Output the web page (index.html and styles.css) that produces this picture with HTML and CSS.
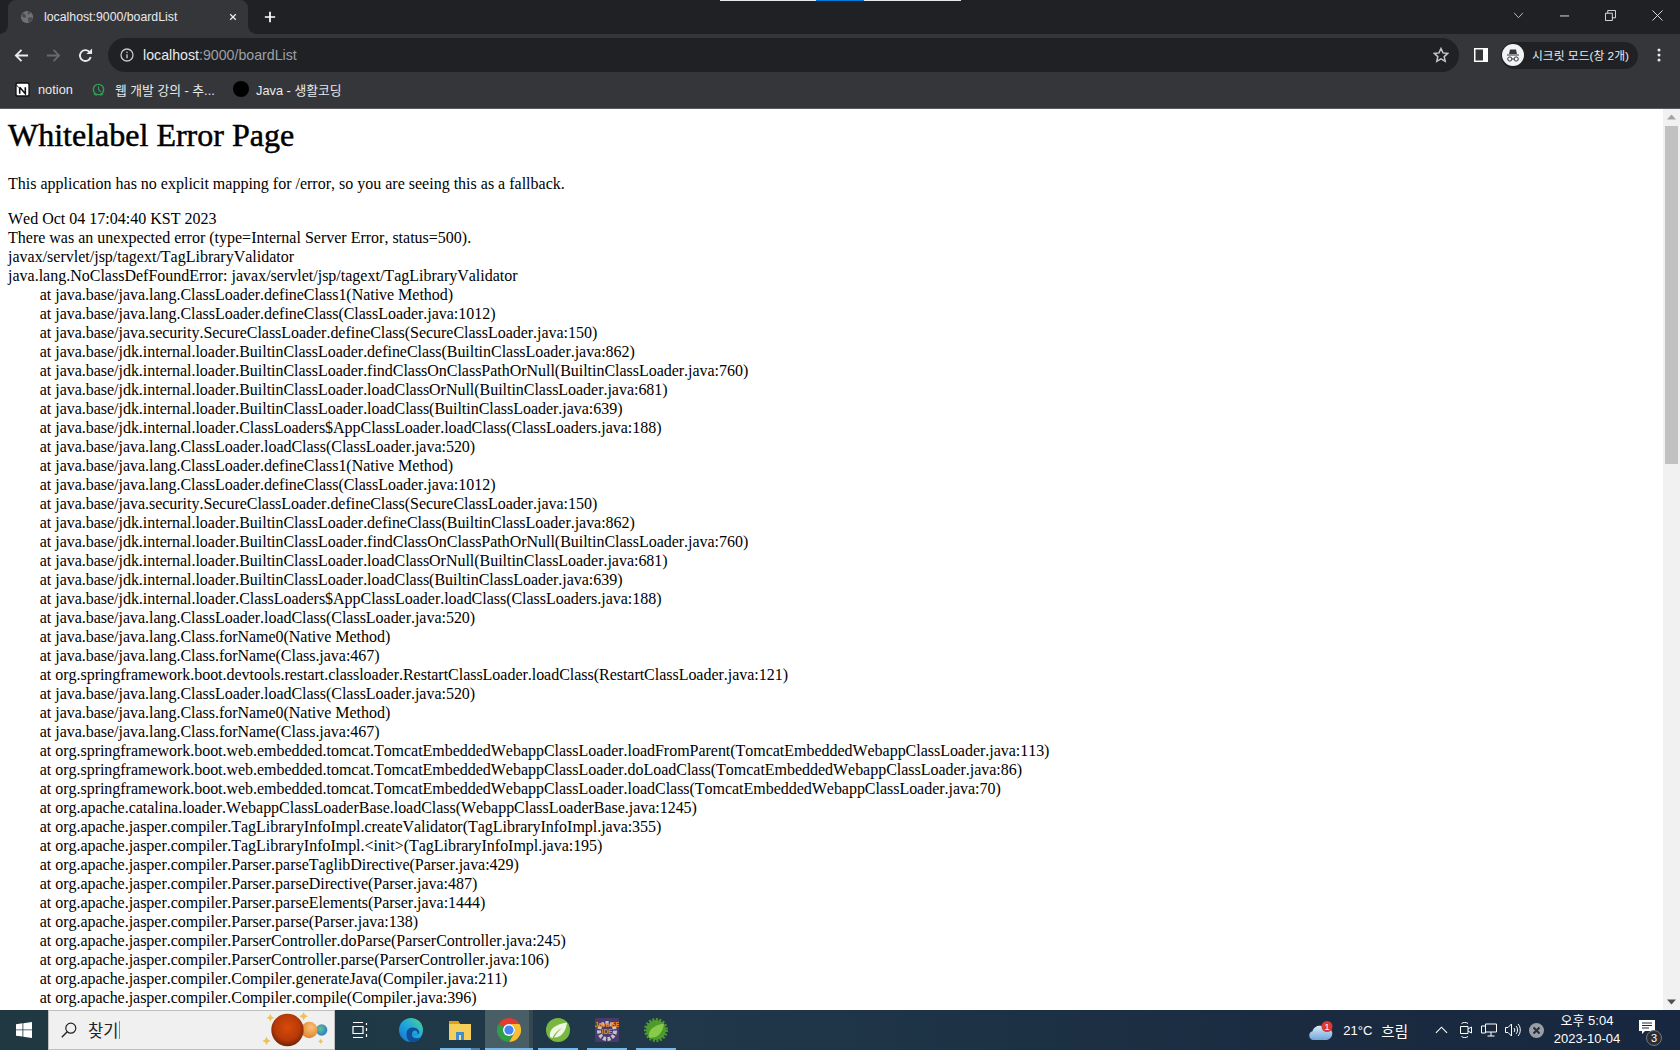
FILE: index.html
```html
<!DOCTYPE html>
<html lang="ko">
<head>
<meta charset="utf-8">
<title>localhost:9000/boardList</title>
<link rel="stylesheet" href="styles.css">
</head>
<body>
<div class="browser">
  <div class="tabstrip">
    <div class="capture-bar"><span class="cap-a"></span><span class="cap-b"></span><span class="cap-a2"></span></div>
    <div class="tab">
      <svg class="tab-favicon" viewBox="0 0 16 16"><circle cx="8" cy="8" r="7" fill="#6f7174"/><path d="M3 3.500l3 1.500 1 2.500-2 1.500-3-2zM9 1.500l3 1-1 2-2 1zM9 9l4-1 1.500 2-3 4-2-.5z" fill="#4a4b4f"/></svg>
      <span class="tab-title">localhost:9000/boardList</span>
      <svg class="tab-close" viewBox="0 0 10 10"><path d="M1.500 1.500l7 7M8.500 1.500l-7 7" stroke="#e8eaed" stroke-width="1.600" fill="none"/></svg>
    </div>
    <svg class="new-tab" viewBox="0 0 14 14"><path d="M7 1v12M1 7h12" stroke="#fff" stroke-width="2" fill="none"/></svg>
    <div class="win-controls">
      <svg class="wc wc-search" viewBox="0 0 12 8"><path d="M1 1l5 5.500 5-5.500" stroke="#c8c9cb" fill="none"/></svg>
      <svg class="wc wc-min" viewBox="0 0 12 12"><path d="M1 6.500h10" stroke="#e8eaed" fill="none"/></svg>
      <svg class="wc wc-max" viewBox="0 0 12 12"><path d="M.5 3.500h7.500v8h-7.500zM3 3.500v-3h8.500v8h-3.500" stroke="#e8eaed" fill="none"/></svg>
      <svg class="wc wc-close" viewBox="0 0 12 12"><path d="M.5.500l11 11M11.500.500l-11 11" stroke="#e8eaed" fill="none"/></svg>
    </div>
  </div>

  <div class="toolbar">
    <div class="nav-group">
      <svg class="nav" viewBox="0 0 16 16"><path d="M15 8H2M8 2L2 8l6 6" stroke="#e8eaed" stroke-width="2" fill="none"/></svg>
      <svg class="nav" viewBox="0 0 16 16"><path d="M1 8h13M8 2l6 6-6 6" stroke="#66686b" stroke-width="2" fill="none"/></svg>
      <svg class="nav" viewBox="0 0 16 16"><path d="M13.500 9.500A5.800 5.800 0 1 1 12 4" stroke="#e8eaed" stroke-width="2" fill="none"/><path d="M9 6.500h6v-6z" fill="#e8eaed"/></svg>
    </div>
    <div class="omnibox">
      <svg class="info" viewBox="0 0 14 14"><circle cx="7" cy="7" r="6" stroke="#c4c6c9" stroke-width="1.300" fill="none"/><path d="M7 6.200v4M7 3.700v1.300" stroke="#c4c6c9" stroke-width="1.400"/></svg>
      <span class="url"><span class="url-host">localhost</span>:9000/boardList</span>
      <svg class="star" viewBox="0 0 16 16"><path d="M8 1.500l2 4.400 4.800.500-3.600 3.200 1 4.700L8 11.900l-4.200 2.400 1-4.700L1.200 6.400 6 5.900z" stroke="#c4c6c9" stroke-width="1.500" fill="none"/></svg>
    </div>
    <svg class="side-panel" viewBox="0 0 14 14"><rect width="14" height="14" fill="#fff"/><rect x="1.500" y="1.500" width="7.500" height="11" fill="#35363a"/></svg>
    <div class="incognito">
      <svg class="inc-icon" viewBox="0 0 22 22"><circle cx="11" cy="11" r="11" fill="#f1f3f4"/><path d="M5 10.500h12v1H5zM7 10l1-4.500h6l1 4.500z" fill="#35363a"/><circle cx="7.800" cy="15" r="2.100" stroke="#35363a" fill="none"/><circle cx="14.200" cy="15" r="2.100" stroke="#35363a" fill="none"/><path d="M9.900 15h2.200" stroke="#35363a"/></svg>
      <span class="inc-label">시크릿 모드(창 2개)</span>
    </div>
    <svg class="kebab" viewBox="0 0 4 14"><circle cx="2" cy="2" r="1.500" fill="#e8eaed"/><circle cx="2" cy="7" r="1.500" fill="#e8eaed"/><circle cx="2" cy="12" r="1.500" fill="#e8eaed"/></svg>
  </div>

  <div class="bookmarks">
    <div class="bm bm-notion">
      <svg class="bm-icon" viewBox="0 0 16 16"><rect x="1" y="1" width="14" height="14" rx="2" fill="#fff" stroke="#111" stroke-width="1.500"/><path d="M1 2.500l3 3.500" stroke="#111"/><path d="M5 5.500v7M5 5.500l6 7V5.500" stroke="#111" stroke-width="1.700" fill="none"/></svg>
      <span>notion</span>
    </div>
    <div class="bm bm-web">
      <svg class="bm-icon" viewBox="0 0 16 16"><circle cx="8" cy="8" r="5.500" stroke="#2f9e58" stroke-width="1.500" fill="none"/><path d="M8 4.500V8l2.500 2.500M3 12.500l3 2M13 12.500l-3 2" stroke="#2f9e58" stroke-width="1.200" fill="none"/></svg>
      <span>웹 개발 강의 - 추...</span>
    </div>
    <div class="bm bm-java">
      <span class="bm-dot"></span>
      <span>Java - 생활코딩</span>
    </div>
  </div>

  <div class="viewport">
    <main class="page">
      <h1 class="err-title">Whitelabel Error Page</h1>
      <p class="err-lead">This application has no explicit mapping for /error, so you are seeing this as a fallback.</p>
      <div class="err-date">Wed Oct 04 17:04:40 KST 2023</div>
      <div>There was an unexpected error (type=Internal Server Error, status=500).</div>
      <div>javax/servlet/jsp/tagext/TagLibraryValidator</div>
      <div>java.lang.NoClassDefFoundError: javax/servlet/jsp/tagext/TagLibraryValidator</div>
      <div class="trace">	at java.base/java.lang.ClassLoader.defineClass1(Native Method)
	at java.base/java.lang.ClassLoader.defineClass(ClassLoader.java:1012)
	at java.base/java.security.SecureClassLoader.defineClass(SecureClassLoader.java:150)
	at java.base/jdk.internal.loader.BuiltinClassLoader.defineClass(BuiltinClassLoader.java:862)
	at java.base/jdk.internal.loader.BuiltinClassLoader.findClassOnClassPathOrNull(BuiltinClassLoader.java:760)
	at java.base/jdk.internal.loader.BuiltinClassLoader.loadClassOrNull(BuiltinClassLoader.java:681)
	at java.base/jdk.internal.loader.BuiltinClassLoader.loadClass(BuiltinClassLoader.java:639)
	at java.base/jdk.internal.loader.ClassLoaders$AppClassLoader.loadClass(ClassLoaders.java:188)
	at java.base/java.lang.ClassLoader.loadClass(ClassLoader.java:520)
	at java.base/java.lang.ClassLoader.defineClass1(Native Method)
	at java.base/java.lang.ClassLoader.defineClass(ClassLoader.java:1012)
	at java.base/java.security.SecureClassLoader.defineClass(SecureClassLoader.java:150)
	at java.base/jdk.internal.loader.BuiltinClassLoader.defineClass(BuiltinClassLoader.java:862)
	at java.base/jdk.internal.loader.BuiltinClassLoader.findClassOnClassPathOrNull(BuiltinClassLoader.java:760)
	at java.base/jdk.internal.loader.BuiltinClassLoader.loadClassOrNull(BuiltinClassLoader.java:681)
	at java.base/jdk.internal.loader.BuiltinClassLoader.loadClass(BuiltinClassLoader.java:639)
	at java.base/jdk.internal.loader.ClassLoaders$AppClassLoader.loadClass(ClassLoaders.java:188)
	at java.base/java.lang.ClassLoader.loadClass(ClassLoader.java:520)
	at java.base/java.lang.Class.forName0(Native Method)
	at java.base/java.lang.Class.forName(Class.java:467)
	at org.springframework.boot.devtools.restart.classloader.RestartClassLoader.loadClass(RestartClassLoader.java:121)
	at java.base/java.lang.ClassLoader.loadClass(ClassLoader.java:520)
	at java.base/java.lang.Class.forName0(Native Method)
	at java.base/java.lang.Class.forName(Class.java:467)
	at org.springframework.boot.web.embedded.tomcat.TomcatEmbeddedWebappClassLoader.loadFromParent(TomcatEmbeddedWebappClassLoader.java:113)
	at org.springframework.boot.web.embedded.tomcat.TomcatEmbeddedWebappClassLoader.doLoadClass(TomcatEmbeddedWebappClassLoader.java:86)
	at org.springframework.boot.web.embedded.tomcat.TomcatEmbeddedWebappClassLoader.loadClass(TomcatEmbeddedWebappClassLoader.java:70)
	at org.apache.catalina.loader.WebappClassLoaderBase.loadClass(WebappClassLoaderBase.java:1245)
	at org.apache.jasper.compiler.TagLibraryInfoImpl.createValidator(TagLibraryInfoImpl.java:355)
	at org.apache.jasper.compiler.TagLibraryInfoImpl.&lt;init&gt;(TagLibraryInfoImpl.java:195)
	at org.apache.jasper.compiler.Parser.parseTaglibDirective(Parser.java:429)
	at org.apache.jasper.compiler.Parser.parseDirective(Parser.java:487)
	at org.apache.jasper.compiler.Parser.parseElements(Parser.java:1444)
	at org.apache.jasper.compiler.Parser.parse(Parser.java:138)
	at org.apache.jasper.compiler.ParserController.doParse(ParserController.java:245)
	at org.apache.jasper.compiler.ParserController.parse(ParserController.java:106)
	at org.apache.jasper.compiler.Compiler.generateJava(Compiler.java:211)
	at org.apache.jasper.compiler.Compiler.compile(Compiler.java:396)</div>
    </main>
    <div class="scrollbar">
      <svg class="sb-arrow" viewBox="0 0 17 17"><path d="M8.500 5.500l4.500 5h-9z" fill="#a3a3a3"/></svg>
      <div class="sb-track"><div class="sb-thumb"></div></div>
      <svg class="sb-arrow" viewBox="0 0 17 17"><path d="M8.500 11.500l4.500-5h-9z" fill="#505050"/></svg>
    </div>
  </div>

  <div class="taskbar">
    <div class="tb-start">
      <svg class="win-logo" viewBox="0 0 16 16"><path d="M0 2.200l6.500-.9v6.200H0zM7.300 1.200L16 0v7.500H7.300zM0 8.300h6.500v6.300L0 13.700zM7.300 8.300H16V16l-8.700-1.200z" fill="#fff"/></svg>
    </div>
    <div class="tb-search">
      <svg class="search-icon" viewBox="0 0 16 16"><circle cx="9.800" cy="6.200" r="5" stroke="#222" stroke-width="1.200" fill="none"/><path d="M6.200 9.800L.8 15.200" stroke="#222" stroke-width="1.400"/></svg>
      <span class="search-text">찾기</span>
      <svg class="planets" viewBox="0 0 72 40">
        <defs>
          <radialGradient id="pl-big" cx=".5" cy=".42" r=".6"><stop offset="0" stop-color="#d94a08"/><stop offset=".65" stop-color="#b63a08"/><stop offset="1" stop-color="#6f1f03"/></radialGradient>
          <radialGradient id="pl-mid" cx=".6" cy=".35" r=".7"><stop offset="0" stop-color="#fbc27a"/><stop offset="1" stop-color="#dd7f2a"/></radialGradient>
          <radialGradient id="pl-small" cx=".4" cy=".4" r=".7"><stop offset="0" stop-color="#5cc59a"/><stop offset="1" stop-color="#2b74c4"/></radialGradient>
        </defs>
        <path d="M9 3l1.300 2.700L13 7l-2.700 1.300L9 11 7.700 8.300 5 7l2.700-1.300zM44 1l1.500 3 3 1.500-3 1.500L44 10l-1.500-3-3-1.500 3-1.500zM5 27l1.500 3 3 1.500-3 1.500L5 36l-1.500-3-3-1.500 3-1.500zM62 29l1 2 2 1-2 1-1 2-1-2-2-1 2-1z" fill="#ecc25c"/>
        <circle cx="63" cy="20" r="6" fill="url(#pl-small)"/>
        <circle cx="50" cy="20" r="8.700" fill="url(#pl-mid)"/>
        <circle cx="27" cy="20" r="17" fill="url(#pl-big)"/>
      </svg>
    </div>
    <svg class="task-view" viewBox="0 0 16 16"><path d="M1 .5h10M1 15.500h10M1 4.500h10v7H1zM14.500 1v2M14.500 6v3M14.500 12v3" stroke="#fff" stroke-width="1.200" fill="none"/></svg>
    <div class="tb-app app-edge">
      <svg class="app-icon" viewBox="0 0 24 24">
        <defs><linearGradient id="edge-g" x1="0" y1="1" x2="1" y2="0"><stop offset="0" stop-color="#1570c8"/><stop offset=".5" stop-color="#1ea6df"/><stop offset="1" stop-color="#52d68a"/></linearGradient></defs>
        <circle cx="12" cy="12" r="12" fill="url(#edge-g)"/>
        <path d="M7.500 15c0-6 9.500-7.500 12.500-2 1 2-.5 3.500-2.500 3.500H13c-.5 3 3 5.500 10 2.500-3 4-7.500 5.500-11 5C9 23.500 7.500 19.500 7.500 15z" fill="#0f4f9a"/>
        <path d="M13 16.500c0-2 1-3.500 2.500-4 2 0 3 1 3 2.500 0 1-.5 1.500-1 1.500z" fill="#1ea6df"/>
      </svg>
    </div>
    <div class="tb-app app-files is-running is-stacked">
      <svg class="app-icon" viewBox="0 0 24 24"><path d="M1 3h9l2 3h11v16H1z" fill="#f6cf5a"/><path d="M1 3h9l2 3H1z" fill="#e69c16"/><path d="M8 14h8v8H8z" fill="#3e8ed0"/><path d="M11 17h2v5h-2z" fill="#f6dd8e"/></svg>
    </div>
    <div class="tb-app app-chrome is-running is-active">
      <svg class="app-icon" viewBox="0 0 24 24"><path d="M12 0A12 12 0 0 1 22.400 6H12a6 6 0 0 0-5.200 3L1.600 6A12 12 0 0 1 12 0z" fill="#e33b2e"/><path d="M22.400 6A12 12 0 0 1 12 24l5.200-9A6 6 0 0 0 12 6z" fill="#fbc02d"/><path d="M1.600 6l5.200 3a6 6 0 0 0 10.400 6L12 24A12 12 0 0 1 1.600 6z" fill="#2f9e48"/><circle cx="12" cy="12" r="6" fill="#fff"/><circle cx="12" cy="12" r="4.600" fill="#4285f4"/></svg>
    </div>
    <div class="tb-app app-spring is-running">
      <svg class="app-icon" viewBox="0 0 24 24"><circle cx="12" cy="12" r="12" fill="#79b83f"/><path d="M4 19c-1.500-8 6-13 17-14.500C20 14 14.500 20 8 19.500c2-4 5-7 8-9.500-4 2-7 5-9.500 10z" fill="#eef5e2"/></svg>
    </div>
    <div class="tb-app app-eclipse is-running">
      <svg class="app-icon" viewBox="0 0 24 24"><rect width="24" height="24" rx="1.500" fill="#4a3a6e"/><circle class="ee-gear" cx="12" cy="13" r="8"/><circle cx="12" cy="13" r="5" fill="#4a3a6e"/><text class="ee-text" x="12" y="8.500">Java EE</text><text class="ee-text" x="12" y="16">IDE</text></svg>
    </div>
    <div class="tb-app app-sts is-running">
      <svg class="app-icon" viewBox="0 0 24 24"><circle class="sts-gear" cx="12" cy="12" r="10.500"/><circle cx="12" cy="12" r="10" fill="#4f9a2c"/><path d="M5 20c-1.500-8 5-13 15-14.500C19 14 14 20 8 19.500z" fill="#86cc4a"/></svg>
    </div>
    <div class="tray">
      <div class="tray-weather">
        <svg class="cloud" viewBox="0 0 24 19">
          <defs><linearGradient id="cloud-g" x1="0" y1="0" x2="0" y2="1"><stop offset="0" stop-color="#dcebf7"/><stop offset="1" stop-color="#6fa6dc"/></linearGradient></defs>
          <path d="M4.500 19a4.500 4.500 0 0 1-1-8.800c1-5 8-7 12-4A6.500 6.500 0 0 1 18 19z" fill="url(#cloud-g)"/><circle cx="18" cy="5.500" r="5.500" fill="#d93a34"/><text class="badge-1" x="18" y="8.500">1</text>
        </svg>
        <span class="tray-temp">21°C</span>
        <span class="tray-cond">흐림</span>
      </div>
      <svg class="tray-i tray-chev" viewBox="0 0 14 8"><path d="M1 7l6-6 6 6" stroke="#fff" stroke-width="1.200" fill="none"/></svg>
      <svg class="tray-i tray-cam" viewBox="0 0 12 16"><path d="M.5 4.500h7.500v7H.5zM8 7l3.500-2v6L8 9M1.500 1.500c2-1.500 4.500-1.500 6.500 0M1.500 14.500c2 1.500 4.500 1.500 6.500 0" stroke="#fff" fill="none"/></svg>
      <svg class="tray-i tray-net" viewBox="0 0 16 14"><path d="M4.500 1h11v8h-11zM.5 3h4v7h-4zM10 9v4M6.500 13h7" stroke="#fff" fill="none"/></svg>
      <svg class="tray-i tray-vol" viewBox="0 0 16 14"><path d="M.5 4.500H3L6.500 1v12L3 9.500H.5zM9 5c1 1 1 3 0 4M11 3c2 2 2 6 0 8M13 1c3 3 3 9 0 12" stroke="#fff" fill="none"/></svg>
      <svg class="tray-i tray-x" viewBox="0 0 15 15"><circle cx="7.500" cy="7.500" r="7.500" fill="#9a9ea6"/><path d="M4.500 4.500l6 6M10.500 4.500l-6 6" stroke="#26303f" stroke-width="2"/></svg>
      <div class="clock"><span>오후 5:04</span><span>2023-10-04</span></div>
      <div class="notif">
        <svg class="notif-icon" viewBox="0 0 16 15"><path d="M0 0h16v11H6l-3 3v-3H0z" fill="#fff"/><path d="M3 3h10M3 5.500h10M3 8h7" stroke="#1b2a40"/></svg>
        <span class="notif-badge">3</span>
      </div>
    </div>
  </div>
</div>
</body>
</html>
```

FILE: styles.css
```css
* { box-sizing: border-box; }
html, body { margin: 0; height: 100%; overflow: hidden; }
body { font-family: "Liberation Sans", "Noto Sans CJK KR", sans-serif; }
.browser { display: flex; flex-direction: column; height: 1050px; width: 1680px; }

/* tab strip */
.tabstrip { position: relative; height: 34px; background: #202124; display: flex; align-items: flex-end; padding-left: 8px; flex: none; }
.capture-bar { position: absolute; top: 0; left: 720px; height: 1px; display: flex; }
.cap-a { width: 96px; background: #e8e8e8; }
.cap-b { width: 48px; background: #0078d7; }
.cap-a2 { width: 97px; background: #e8e8e8; }
.tab { position: relative; width: 240px; height: 34px; background: #35363a; border-radius: 8px 8px 0 0; display: flex; align-items: center; padding: 0 11px 0 12px; color: #e8eaed; font-size: 12.3px; }
.tab::before, .tab::after { content: ""; position: absolute; bottom: 0; width: 8px; height: 8px; }
.tab::before { left: -8px; background: radial-gradient(circle at 0 0, #202124 7.500px, #35363a 8px); }
.tab::after { right: -8px; background: radial-gradient(circle at 100% 0, #202124 7.500px, #35363a 8px); }
.tab-favicon { width: 14px; height: 14px; margin-right: 10px; flex: none; }
.tab-title { flex: 1; white-space: nowrap; overflow: hidden; }
.tab-close { width: 8px; height: 8px; flex: none; }
.new-tab { width: 12px; height: 12px; margin: 0 0 11px 16px; flex: none; }
.win-controls { margin-left: auto; display: flex; align-items: center; align-self: stretch; padding-bottom: 4px; }
.wc { flex: none; }
.wc-search { width: 11px; height: 7px; margin-right: 35px; }
.wc-min { width: 11px; height: 11px; margin-right: 35px; }
.wc-max { width: 11px; height: 11px; margin-right: 36px; }
.wc-close { width: 11px; height: 11px; margin-right: 17px; }

/* toolbar */
.toolbar { height: 42px; background: #35363a; display: flex; align-items: center; padding: 0 0 0 14px; flex: none; }
.nav-group { display: flex; gap: 17px; margin-right: 15px; flex: none; }
.nav { width: 15px; height: 15px; flex: none; }
.omnibox { width: 1351px; height: 34px; border-radius: 17px; background: #202124; display: flex; align-items: center; padding: 0 10px 0 12px; font-size: 14.200px; color: #9aa0a6; flex: none; }
.info { width: 14px; height: 14px; margin-right: 9px; flex: none; }
.url { flex: 1; white-space: nowrap; }
.url-host { color: #e8eaed; }
.star { width: 16px; height: 16px; flex: none; }
.side-panel { width: 14px; height: 14px; margin-left: 15px; flex: none; }
.incognito { margin-left: 13px; width: 137px; height: 27px; border-radius: 14px; background: #202124; display: flex; align-items: center; padding-left: 1px; flex: none; color: #e8eaed; font-size: 11.800px; }
.inc-icon { width: 22px; height: 22px; margin-right: 8px; flex: none; }
.inc-label { white-space: nowrap; margin-bottom: 2px; }
.kebab { width: 4px; height: 14px; margin-left: 19px; flex: none; }

/* bookmarks */
.bookmarks { height: 33px; background: #35363a; border-bottom: 1px solid #5a5b5f; display: flex; align-items: center; padding: 0 0 6px 15px; color: #e8eaed; font-size: 12.800px; flex: none; }
.bm { display: flex; align-items: center; white-space: nowrap; }
.bm-icon { width: 15px; height: 15px; flex: none; }
.bm-notion { width: 76px; gap: 8px; }
.bm-web { width: 142px; gap: 9px; }
.bm-java { gap: 7px; }
.bm-dot { width: 16px; height: 16px; border-radius: 50%; background: #000; flex: none; }

/* page */
.viewport { height: 901px; display: flex; background: #fff; flex: none; }
.page { flex: 1; min-width: 0; overflow: hidden; padding: 0 8px; font-family: "Liberation Serif", "Noto Sans CJK KR", serif; font-size: 16px; line-height: 19px; color: #000; font-kerning: none; }
.err-title { margin: 8px 0 20px; font-size: 32px; line-height: 37px; font-weight: normal; -webkit-text-stroke: .5px #000; }
.err-lead { margin: 0 0 16px; }
.trace { white-space: pre-wrap; tab-size: 8; letter-spacing: -.028px; }
.scrollbar { width: 17px; background: #f1f1f1; display: flex; flex-direction: column; flex: none; }
.sb-arrow { width: 17px; height: 17px; flex: none; }
.sb-track { flex: 1; padding: 0 2px; }
.sb-thumb { height: 338px; background: #c1c1c1; }

/* taskbar */
.taskbar { height: 40px; display: flex; align-items: center; background: linear-gradient(90deg, #1f3842 0%, #20384a 40%, #1a2b40 78%, #17273f 100%); flex: none; color: #fff; }
.tb-start { width: 48px; display: flex; justify-content: center; align-items: center; flex: none; }
.win-logo { width: 16px; height: 16px; }
.tb-search { width: 287px; height: 40px; background: #f0f0f0; border: 1px solid #bfbfbf; display: flex; align-items: center; padding-left: 12px; color: #222; font-size: 16.500px; flex: none; }
.search-icon { width: 16px; height: 16px; margin-right: 11px; flex: none; }
.search-text { flex: 1; display: flex; align-items: center; }
.search-text::after { content: ""; width: 1px; height: 18px; background: #6e8fb5; margin-left: 1px; }
.planets { width: 72px; height: 38px; margin-right: 2px; flex: none; }
.task-view { width: 16px; height: 16px; margin: 0 19px 0 17px; flex: none; }
.tb-app { position: relative; width: 48px; height: 40px; display: flex; align-items: center; justify-content: center; flex: none; margin-right: 1px; }
.app-icon { width: 24px; height: 24px; }
.is-running::after { content: ""; position: absolute; left: 4px; right: 4px; bottom: 0; height: 2px; background: #76b9ed; }
.is-stacked::after { background: linear-gradient(90deg, #76b9ed 31px, #4d7fa6 31px); }
.is-active { background: linear-gradient(90deg, #4a5e66 44px, #34464f 44px); }
.is-active::after { left: 0; right: 0; }
.ee-text { font-family: "Liberation Sans", sans-serif; font-size: 6.500px; font-weight: bold; fill: #e88a20; text-anchor: middle; }
.ee-gear { fill: none; stroke: #c4c4c4; stroke-width: 4; stroke-dasharray: 3 1.500; }
.sts-gear { fill: none; stroke: #4f9a2c; stroke-width: 3; stroke-dasharray: 2 1.500; }
.tray { margin-left: auto; display: flex; align-items: center; height: 40px; flex: none; }
.tray-weather { display: flex; align-items: center; font-size: 13px; margin-right: 27px; }
.cloud { width: 24px; height: 19px; margin-right: 10px; }
.tray-cond { margin-left: 9px; font-size: 14.500px; }
.tray-i { flex: none; }
.tray-chev { width: 13px; height: 8px; margin-right: 12px; }
.tray-cam { width: 12px; height: 16px; margin-right: 9px; }
.tray-net { width: 16px; height: 14px; margin-right: 8px; }
.tray-vol { width: 16px; height: 14px; margin-right: 8px; }
.tray-x { width: 15px; height: 15px; margin-right: 10px; }
.clock { display: flex; flex-direction: column; align-items: center; font-size: 13px; line-height: 18px; width: 66px; margin-right: 19px; white-space: nowrap; }
.badge-1 { font-family: "Liberation Sans", sans-serif; font-size: 9px; fill: #fff; text-anchor: middle; }
.notif { position: relative; width: 41px; height: 40px; display: flex; align-items: center; }
.notif-icon { width: 16px; height: 15px; margin-bottom: 6px; }
.notif-badge { position: absolute; left: 7px; top: 20px; width: 16px; height: 16px; border-radius: 50%; background: #2a2d33; border: 1px solid #777; font-size: 11px; line-height: 14px; text-align: center; color: #fff; }
```
